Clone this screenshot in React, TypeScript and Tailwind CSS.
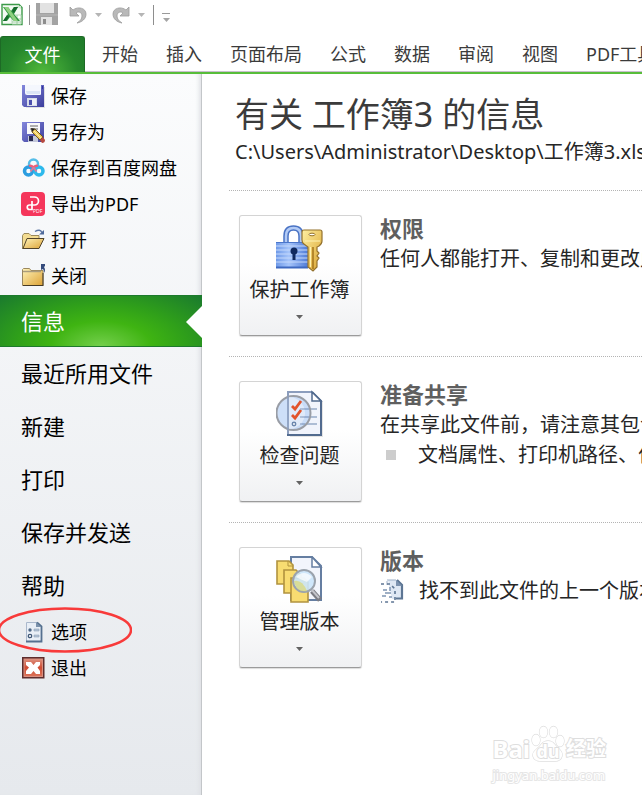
import type { ReactNode } from 'react'

/* ---------- icons ---------- */

function ExcelIcon() {
  return (
    <svg width="24" height="24" viewBox="0 0 24 24" aria-hidden="true">
      <path d="M2 1.500h17l3 3v17H2z" fill="#f4faf4" stroke="#3c9a49" strokeWidth="1.4" />
      <path d="M12 12h9v9h-9z" fill="#fff" stroke="#b5d8b8" />
      <path d="M12 16h9M12 19h9M17 12v9" stroke="#9ccba0" />
      <path d="M15 3h6v3z" fill="#cfe8cf" />
      <path d="M3 4h5l3 4 3-4h4l-4 7 6 7h-6l-4-4-3 4H3l5-7z" fill="#2f9440" />
      <path d="M4 4h4l10 14h-4z" fill="#8ed07f" />
      <path d="M14 4h4l-4 6-2-2z" fill="#156b2c" />
      <path d="M3 18l4-6 2 2-3 4z" fill="#156b2c" />
    </svg>
  )
}

function GreyDiskIcon() {
  return (
    <svg width="24" height="24" viewBox="0 0 24 24" aria-hidden="true">
      <path d="M1 0h22v22H3l-2-2z" fill="#a3a3a3" />
      <path d="M5 0h14v10H5z" fill="#e2e2e2" />
      <path d="M6 14h11v8H6z" fill="#e4e4e4" />
      <path d="M8 16h3v5H8z" fill="#8d8d8d" />
      <path d="M1 12h22" stroke="#b8b8b8" />
    </svg>
  )
}

function UndoIcon({ flipped = false }: { flipped?: boolean }) {
  return (
    <svg
      width="18"
      height="20"
      viewBox="0 0 18 20"
      className={flipped ? '-scale-x-100' : ''}
      aria-hidden="true"
    >
      <path
        d="M1 2v9h9l-3-3c2-2 6-1 6 3 0 3-2 5-5 7 5-1 9-4 9-9C17 3 9 1 4 5z"
        fill="#b9b9b9"
        stroke="#9c9c9c"
        strokeWidth="0.8"
      />
    </svg>
  )
}

function Caret({ className }: { className: string }) {
  return (
    <svg width="7" height="4" viewBox="0 0 7 4" className={className} aria-hidden="true">
      <path d="M0 0h7L3.500 4z" fill="currentColor" />
    </svg>
  )
}

function DiskIcon() {
  return (
    <svg width="24" height="24" viewBox="0 0 24 24" aria-hidden="true">
      <defs>
        <linearGradient id="disk" x1="0" y1="0" x2="1" y2="1">
          <stop offset="0" stopColor="#8387dc" />
          <stop offset="1" stopColor="#3c3e9c" />
        </linearGradient>
      </defs>
      <path d="M3 3h21v21H5z" fill="#000" opacity="0.1" />
      <path d="M1 1h22v22H3l-2-2z" fill="url(#disk)" />
      <path d="M4 1h16v9q0 1-1 1H6q-2 0-2-2z" fill="#f4f7fd" />
      <path d="M5 7h14v3H6z" fill="#dbe5f6" />
      <path d="M21 2h1v3h-1z" fill="#3335a0" />
      <path d="M6 14h10v8H6z" fill="#d7dcea" />
      <path d="M8 16h3v5H8z" fill="#4b4fae" />
      <path d="M11 15h4v6h-4z" fill="#eef0f8" />
    </svg>
  )
}

function SaveAsIcon() {
  return (
    <svg width="24" height="24" viewBox="0 0 24 24" aria-hidden="true">
      <path d="M1 2h22v20H3l-2-2z" fill="url(#disk)" />
      <path d="M6 3h13v11H6z" fill="#f8f8fb" />
      <path d="M9 6h8M9 9h8" stroke="#666" />
      <path d="M7 16h10v6H7z" fill="#c3c7da" />
      <path d="M8 16h4v5H8z" fill="#282a4e" />
      <path d="M11 9h3l8 8-3 3-8-8z" fill="#edcd63" stroke="#705623" />
      <path d="M10 8l4 1-3 3z" fill="#222" />
      <path d="M19 20l3-3 2 3q0 3-3 3z" fill="#b6493f" />
      <path d="M13 11l7 7" stroke="#fff1a8" />
    </svg>
  )
}

function NetdiskIcon() {
  return (
    <svg width="24" height="24" viewBox="0 0 24 24" fill="none" aria-hidden="true">
      <circle cx="12.500" cy="8" r="4.500" stroke="#55bde8" strokeWidth="2.500" />
      <circle cx="7.500" cy="15" r="4" stroke="#2b9de0" strokeWidth="3.500" />
      <circle cx="18" cy="15" r="4" stroke="#2db9ec" strokeWidth="3.500" />
      <path d="M8 10q2-1 4.500 1.500Q15 9 17 10" stroke="#ea5f78" strokeWidth="2.500" />
      <path d="M12.500 11.500l-3 4M12.500 11.500l3 4" stroke="#d77b9c" strokeWidth="2" />
    </svg>
  )
}

function PdfIcon() {
  return (
    <svg width="24" height="24" viewBox="0 0 24 24" aria-hidden="true">
      <rect width="24" height="24" rx="4" fill="#f5365b" />
      <path
        d="M9 5h4.500a4 4 0 0 1 0 8H8.500a2.200 2.200 0 0 0 0 4.500H11V9"
        fill="none"
        stroke="#fff"
        strokeWidth="1.700"
      />
      <text x="12" y="21" fontSize="5" fill="#fff" fontFamily="Open Sans, sans-serif">
        PDF
      </text>
    </svg>
  )
}

function OpenIcon() {
  return (
    <svg width="24" height="24" viewBox="0 0 24 24" aria-hidden="true">
      <defs>
        <linearGradient id="folder" x1="0" y1="0" x2="1" y2="1">
          <stop offset="0" stopColor="#fff3b8" />
          <stop offset="1" stopColor="#dca236" />
        </linearGradient>
      </defs>
      <path d="M1.500 21V7.500l1.500-2h5l2 2h8V11" fill="#f3dc91" stroke="#9b8a5c" />
      <path d="M6 10.500h17l-5 10H2z" fill="url(#folder)" stroke="#51432a" />
      <path d="M14 3.500q5-3 7 1" fill="none" stroke="#5d77a5" strokeWidth="1.400" />
      <path d="M23 2v4.500h-5z" fill="#4f6a9b" />
    </svg>
  )
}

function CloseFolderIcon() {
  return (
    <svg width="24" height="24" viewBox="0 0 24 24" aria-hidden="true">
      <path d="M1.500 21.500V5.500l1-1h6l1.500 2h12v15z" fill="url(#folder)" stroke="#9a875d" />
      <path d="M2 21.500h20M22 9v13" stroke="#463a25" />
      <path d="M2 7.500h18" stroke="#a89c7e" strokeWidth="1.500" />
      <path d="M20 0h4v2l-1 1q2 3 0 6q0-3-1-4l-2 1z" fill="#354b7c" />
    </svg>
  )
}

function OptionsIcon() {
  return (
    <svg width="24" height="24" viewBox="0 0 24 24" aria-hidden="true">
      <path d="M5 2h11l4 4v16H5z" fill="#e8eef6" />
      <path d="M5.500 22V2.500H16" fill="none" stroke="#aab8cc" />
      <path d="M16 2.500l4.500 4V21.500H5" fill="none" stroke="#55708f" strokeWidth="1.800" />
      <path d="M15 2v5h5z" fill="#7b92ad" />
      <circle cx="9" cy="10" r="1.700" fill="#4e6786" />
      <circle cx="9" cy="16" r="1.700" fill="#fff" stroke="#3f5878" strokeWidth="1.300" />
      <path d="M13 9h5v2h-5zM13 15h5v2h-5z" fill="#b4c3d6" stroke="#8fa2bb" strokeWidth="0.600" />
    </svg>
  )
}

function ExitIcon() {
  return (
    <svg width="24" height="24" viewBox="0 0 24 24" aria-hidden="true">
      <defs>
        <linearGradient id="exit" x1="0" y1="0" x2="0" y2="1">
          <stop offset="0" stopColor="#dd907e" />
          <stop offset="0.500" stopColor="#cf4b33" />
          <stop offset="1" stopColor="#dc7459" />
        </linearGradient>
      </defs>
      <rect x="1" y="1" width="22.500" height="21.500" fill="#5d2d2d" />
      <rect x="3" y="3" width="18.500" height="17.500" fill="url(#exit)" stroke="#d98f80" />
      <path
        d="M5 6h5l2.500 3L15 6h4v3l-2.500 2.500L19 15v3h-4l-2.500-3-2.500 3H5v-3l3-3.500L5 9z"
        fill="#fff"
      />
    </svg>
  )
}

function LockKeyIcon() {
  return (
    <svg width="48" height="48" viewBox="1 0 48 48" aria-hidden="true">
      <defs>
        <linearGradient id="lock" x1="0" y1="0" x2="1" y2="0">
          <stop offset="0" stopColor="#6f9ae8" />
          <stop offset="0.400" stopColor="#a5c4fa" />
          <stop offset="1" stopColor="#4f7bd6" />
        </linearGradient>
        <linearGradient id="key" x1="0" y1="0" x2="1" y2="1">
          <stop offset="0" stopColor="#fff0a2" />
          <stop offset="1" stopColor="#d9a22d" />
        </linearGradient>
      </defs>
      <path d="M11 19V12q0-8 7.500-8t7.500 8v7" fill="none" stroke="#4a73c4" strokeWidth="5.500" />
      <path d="M11 19V12q0-8 7.500-8t7.500 8v7" fill="none" stroke="#b3cbf5" strokeWidth="2.500" />
      <rect x="1" y="18" width="32" height="26" fill="url(#lock)" />
      <path d="M1 22h32M1 26h32M1 30h32M1 34h32M1 38h32" stroke="#c5d9fc" />
      <path d="M1 43.500h32" stroke="#3d68c0" strokeWidth="2" />
      <path d="M1 18.500h32" stroke="#4b76cb" />
      <circle cx="19" cy="27" r="3.500" fill="#10295e" />
      <path d="M17.500 27h3v9h-3z" fill="#10295e" />
      <path d="M27 8q0-2 2-2h16q2 0 2 2v9q0 3-3 5l-2 1v4l2 2-2 3 2 2-2 3v6l-4 4-5-4V23l-4-3q-2-1-2-4z" fill="url(#key)" stroke="#94722d" strokeWidth="1.200" />
      <path d="M38 23v22" stroke="#a47318" strokeWidth="1.500" />
      <path d="M35.500 23v20" stroke="#fff3b4" />
      <ellipse cx="37" cy="10.500" rx="3" ry="1.300" fill="#fff" stroke="#94722d" />
      <path d="M30 17h15" stroke="#fff3b4" />
    </svg>
  )
}

function InspectIcon() {
  return (
    <svg width="48" height="48" viewBox="1 0 48 48" aria-hidden="true">
      <path d="M14 2h24l9 9v35H14z" fill="#000" opacity="0.1" transform="translate(1 1)" />
      <path d="M13 2h24l9 9v34H13z" fill="#f1f4fc" />
      <path d="M13 45V2h24" fill="none" stroke="#8b9dbd" strokeWidth="2" />
      <path d="M37 2l9 9v34H12" fill="none" stroke="#526b8f" strokeWidth="2" />
      <path d="M37 2v9h9z" fill="#fff" stroke="#526b8f" strokeWidth="1.500" />
      <path d="M27 19h15M27 27h15M27 34h15" stroke="#6a86ad" strokeWidth="1.200" />
      <circle cx="18.500" cy="23" r="17" fill="#b8d2f5" fillOpacity="0.700" stroke="#999da5" strokeWidth="2" />
      <path d="M14 7v32a16 16 0 0 0 0-32z" fill="#e9effa" opacity="0.700" />
      <path d="M13 6v34" stroke="#8b9dbd" strokeWidth="1.500" />
      <path d="M17 16l3 3 6-8M17 25l3 3 6-8" fill="none" stroke="#e2532b" strokeWidth="2.800" />
      <path d="M25 19h9M25 27h9M25 34h5" stroke="#8299bd" />
      <circle cx="19" cy="34" r="1.700" fill="#fff" stroke="#6a86ad" strokeWidth="1.500" />
    </svg>
  )
}

function VersionsIcon() {
  return (
    <svg width="48" height="48" viewBox="1 0 48 48" aria-hidden="true">
      <path d="M16 1h21l9 9v34H16z" fill="#f2f5fc" stroke="#657ea1" strokeWidth="2" />
      <path d="M37 1v10h9z" fill="#fff" stroke="#657ea1" strokeWidth="1.500" />
      <g fill="#f8dc71" stroke="#b1933f" strokeWidth="1.600">
        <path d="M2 5h12l4 4v19H2z" />
        <path d="M9 14h12l5 5v18H9z" />
        <path d="M16 22h13l4 4v20H16z" />
      </g>
      <path d="M13 5v5h5" fill="none" stroke="#b1933f" />
      <path d="M37 35l8 9" stroke="#7b7c83" strokeWidth="5" />
      <path d="M36 33l8 9" stroke="#c3c4ca" strokeWidth="2" />
      <circle cx="29" cy="25" r="11" fill="#cbe6fb" fillOpacity="0.900" stroke="#9ba3ad" strokeWidth="2" />
      <path d="M19 25q8-2 13 10q-11 2-13-10z" fill="#dcd873" opacity="0.700" />
      <path d="M21 21q8-8 16 0l-5 5-7-3z" fill="#fff" opacity="0.700" />
    </svg>
  )
}

function NoVersionIcon() {
  return (
    <svg width="24" height="24" viewBox="0 0 24 24" aria-hidden="true">
      <path d="M8 1h10l4 4v15H12" fill="#dfe8f4" />
      <path d="M17 1l5 5v13.500h-6" fill="none" stroke="#5d7694" strokeWidth="2.200" />
      <path d="M16 1v6h6z" fill="#7d93b0" />
      <path d="M7 1h9M7 2v4" fill="none" stroke="#9dafc7" />
      <path d="M1 5h9l5 5v13H1" fill="none" stroke="#5d7694" strokeWidth="1.600" strokeDasharray="3 3" />
      <path d="M3 11h4M5 14h6M2 17h4M9 18h3M10 8v4" stroke="#7f95b2" strokeWidth="1.500" />
    </svg>
  )
}

function PawIcon() {
  return (
    <svg width="36" height="38" viewBox="0 0 36 38" fill="#fff" stroke="#dedede" strokeWidth="1.300" aria-hidden="true">
      <ellipse cx="6" cy="15" rx="4" ry="5.500" />
      <ellipse cx="13.500" cy="7" rx="4" ry="5.500" />
      <ellipse cx="23.500" cy="7" rx="4" ry="5.500" />
      <ellipse cx="30" cy="16" rx="4" ry="5.500" />
      <path d="M18 16c5 0 6 3 9 6s6 5 5 9-4 5-7 5H11c-4 0-7-1-8-5s3-6 6-9 4-6 9-6z" />
    </svg>
  )
}

/* ---------- data ---------- */

const TABS = ['开始', '插入', '页面布局', '公式', '数据', '审阅', '视图', 'PDF工具']

const FILE_ACTIONS = [
  { label: '保存', icon: <DiskIcon /> },
  { label: '另存为', icon: <SaveAsIcon /> },
  { label: '保存到百度网盘', icon: <NetdiskIcon /> },
  { label: '导出为PDF', icon: <PdfIcon /> },
  { label: '打开', icon: <OpenIcon /> },
  { label: '关闭', icon: <CloseFolderIcon /> },
]

const PAGES = ['最近所用文件', '新建', '打印', '保存并发送', '帮助']

/* ---------- parts ---------- */

function SmallItem({ icon, label, children }: { icon: ReactNode; label: string; children?: ReactNode }) {
  return (
    <li className="relative">
      <button className="flex h-9 w-full items-center gap-1.5 pl-[21px] text-lg text-black">
        <span className="shrink-0">{icon}</span>
        {label}
      </button>
      {children}
    </li>
  )
}

interface SectionProps {
  icon: ReactNode
  action: string
  title: string
  children: ReactNode
}

function Section({ icon, action, title, children }: SectionProps) {
  return (
    <section className="flex h-[166px] gap-[18px] border-t border-dotted border-[#b4b4b4] pt-6 pl-2.5">
      <button className="flex h-[121px] w-[123px] shrink-0 flex-col items-center rounded-[3px] border border-[#d4d4d4] border-b-[#9b9b9b] bg-linear-to-b from-white from-40% to-[#f0f1f3] pt-2 pr-0.5 text-xl text-[#262626] shadow-[0_1px_1px_#dcdcdc]">
        {icon}
        <span className="mt-1 leading-7">{action}</span>
        <Caret className="mt-[11px] text-[#636363]" />
      </button>
      <div className="text-xl leading-[30px] text-[#262626]">
        <h2 className="-mt-0.5 mb-px text-[22px] font-bold text-[#5f5f5f]">{title}</h2>
        {children}
      </div>
    </section>
  )
}

export default function App() {
  return (
    <div className="relative flex min-h-screen flex-col overflow-hidden bg-white font-['Noto_Sans','Noto_Sans_CJK_SC',sans-serif] whitespace-nowrap">
      <header>
        <div className="flex h-9 items-start pt-[3px]">
          <ExcelIcon />
          <span className="mt-0.5 ml-[5px] h-5 w-px bg-[#8e8e8e]" />
          <button className="ml-[5px]" aria-label="保存">
            <GreyDiskIcon />
          </button>
          <button className="mt-0.5 ml-2.5" aria-label="撤消">
            <UndoIcon />
          </button>
          <Caret className="mt-2.5 ml-2 text-[#b5b5b5]" />
          <button className="mt-0.5 ml-2.5" aria-label="恢复">
            <UndoIcon flipped />
          </button>
          <Caret className="mt-2.5 ml-2 text-[#b5b5b5]" />
          <span className="mt-0.5 ml-2 h-5 w-px bg-[#8e8e8e]" />
          <button className="mt-2.5 ml-2 flex w-2 flex-col items-center gap-1" aria-label="自定义快速访问工具栏">
            <span className="h-px w-full bg-[#9a9a9a]" />
            <Caret className="text-[#a5a5a5]" />
          </button>
        </div>
        <nav className="flex h-[38px] items-stretch border-b-2 border-[#58bd3a] text-lg text-[#3b3b3b]">
          <button className="w-[85px] shrink-0 rounded-t-[3px] border border-b-0 border-[#1d6a25] bg-[radial-gradient(ellipse_at_bottom,#4fb83a,#26862c_60%,#1f7a2a)] text-white">
            文件
          </button>
          <div className="flex w-0 grow items-stretch border-b border-[#c9bfce] pl-[3px]">
            {TABS.map((tab) => (
              <button key={tab} className="shrink-0 px-3.5">
                {tab}
              </button>
            ))}
          </div>
        </nav>
      </header>

      <div className="flex grow">
        <aside className="w-[202px] shrink-0 border-r border-[#c3c6c9] bg-linear-to-b from-[#fbfcfd] to-[#e6e9ed] pt-1 shadow-[inset_-4px_0_4px_-2px_#dfe1e5]">
          <ul>
            {FILE_ACTIONS.map((item) => (
              <SmallItem key={item.label} {...item} />
            ))}
          </ul>
          <button className="relative mt-px block h-[52px] w-[202px] border-y border-[#1d7a2c] bg-[radial-gradient(ellipse_at_50%_100%,#74cf4c,#3fb412_35%,#2f9f1a_60%,#1a7a2e)] pl-[21px] text-left text-[22px] text-white">
            信息
            <svg width="16" height="32" viewBox="0 0 16 32" className="absolute top-2.5 right-0" aria-hidden="true">
              <path d="M16 0L0 16l16 16z" fill="#fff" />
            </svg>
          </button>
          <ul>
            {PAGES.map((page) => (
              <li key={page}>
                <button className="h-[53px] w-full pl-[21px] text-left text-[22px] text-black">{page}</button>
              </li>
            ))}
          </ul>
          <ul className="mt-0.5">
            <SmallItem icon={<OptionsIcon />} label="选项">
              <svg
                width="134"
                height="48"
                viewBox="0 0 134 48"
                fill="none"
                className="pointer-events-none absolute -top-2 -left-0.5"
                aria-hidden="true"
              >
                <ellipse cx="67" cy="24" rx="66" ry="21.500" stroke="#f83a3a" strokeWidth="2.500" />
              </svg>
            </SmallItem>
            <SmallItem icon={<ExitIcon />} label="退出" />
          </ul>
        </aside>

        <main className="w-0 grow overflow-hidden pt-4 pl-[27px]">
          <h1 className="pl-1.5 text-[34px] leading-[48px] text-[#3b3b3b]">有关 工作簿3 的信息</h1>
          <p className="mb-6 pl-1.5 text-xl leading-7 text-[#262626]">
            C:\Users\Administrator\Desktop\工作簿3.xlsx
          </p>

          <Section icon={<LockKeyIcon />} action="保护工作簿" title="权限">
            <p>任何人都能打开、复制和更改此工作簿的任何部分。</p>
          </Section>
          <Section icon={<InspectIcon />} action="检查问题" title="准备共享">
            <p>在共享此文件前，请注意其包含以下内容:</p>
            <ul>
              <li className="flex items-center gap-[22px] pl-1.5">
                <span className="size-2.5 bg-[#cdcdcd]" />
                文档属性、打印机路径、作者的姓名
              </li>
            </ul>
          </Section>
          <Section icon={<VersionsIcon />} action="管理版本" title="版本">
            <p className="flex items-center gap-[15px]">
              <NoVersionIcon />
              找不到此文件的上一个版本。
            </p>
          </Section>
        </main>
      </div>

      <div className="absolute right-9 bottom-3 text-white [paint-order:stroke_fill]">
        <div className="flex items-end text-2xl leading-7 font-bold [-webkit-text-stroke:2px_#dedede]">
          Bai
          <span className="relative">
            <PawIcon />
            <span className="absolute inset-x-0 bottom-0 text-center text-lg leading-6">du</span>
          </span>
          <span className="text-xl leading-7">经验</span>
        </div>
        <p className="mt-1 text-[13px] leading-4 [-webkit-text-stroke:2px_#e6e6e6]">jingyan.baidu.com</p>
      </div>
    </div>
  )
}
